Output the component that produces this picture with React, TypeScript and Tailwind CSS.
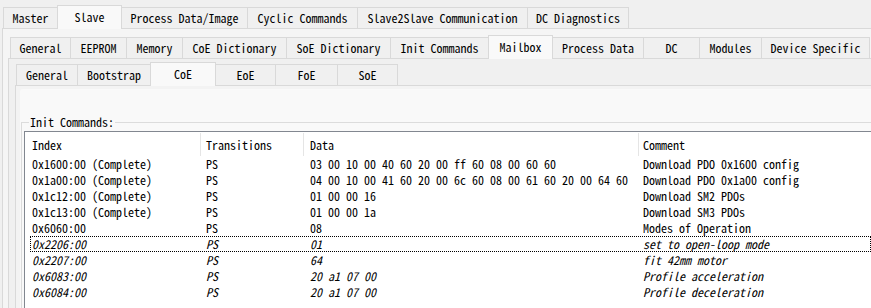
import React from "react";

type Tab = { label: string; start: number; end: number };

const row1: Tab[] = [
  { label: "Master", start: 3, end: 57 },
  { label: "Slave", start: 57, end: 121 },
  { label: "Process Data/Image", start: 121, end: 247 },
  { label: "Cyclic Commands", start: 247, end: 357 },
  { label: "Slave2Slave Communication", start: 357, end: 527 },
  { label: "DC Diagnostics", start: 527, end: 628 },
];

const row2: Tab[] = [
  { label: "General", start: 10, end: 70 },
  { label: "EEPROM", start: 70, end: 126 },
  { label: "Memory", start: 126, end: 182 },
  { label: "CoE Dictionary", start: 182, end: 286 },
  { label: "SoE Dictionary", start: 286, end: 390 },
  { label: "Init Commands", start: 390, end: 488 },
  { label: "Mailbox", start: 488, end: 552 },
  { label: "Process Data", start: 552, end: 643 },
  { label: "DC", start: 643, end: 699 },
  { label: "Modules", start: 699, end: 761 },
  { label: "Device Specific", start: 761, end: 869 },
];

const row3: Tab[] = [
  { label: "General", start: 16, end: 77 },
  { label: "Bootstrap", start: 77, end: 150 },
  { label: "CoE", start: 150, end: 215 },
  { label: "EoE", start: 215, end: 275 },
  { label: "FoE", start: 275, end: 337 },
  { label: "SoE", start: 337, end: 397 },
];

type Cmd = { index: string; tr: string; data: string; comment: string; italic?: boolean; focus?: boolean };

const cmds: Cmd[] = [
  { index: "0x1600:00 (Complete)", tr: "PS", data: "03 00 10 00 40 60 20 00 ff 60 08 00 60 60", comment: "Download PDO 0x1600 config" },
  { index: "0x1a00:00 (Complete)", tr: "PS", data: "04 00 10 00 41 60 20 00 6c 60 08 00 61 60 20 00 64 60", comment: "Download PDO 0x1a00 config" },
  { index: "0x1c12:00 (Complete)", tr: "PS", data: "01 00 00 16", comment: "Download SM2 PDOs" },
  { index: "0x1c13:00 (Complete)", tr: "PS", data: "01 00 00 1a", comment: "Download SM3 PDOs" },
  { index: "0x6060:00", tr: "PS", data: "08", comment: "Modes of Operation" },
  { index: "0x2206:00", tr: "PS", data: "01", comment: "set to open-loop mode", italic: true, focus: true },
  { index: "0x2207:00", tr: "PS", data: "64", comment: "fit 42mm motor", italic: true },
  { index: "0x6083:00", tr: "PS", data: "20 a1 07 00", comment: "Profile acceleration", italic: true },
  { index: "0x6084:00", tr: "PS", data: "20 a1 07 00", comment: "Profile deceleration", italic: true },
];

function TabRow({ tabs, selected, className }: { tabs: Tab[]; selected: number; className: string }) {
  return (
    <div className={"flex items-end " + className}>
      {tabs.map((t, i) => {
        const sel = i === selected;
        return (
          <div
            key={t.label + i}
            style={{ width: t.end - t.start + 1 }}
            className={
              "flex shrink-0 items-center justify-center whitespace-nowrap border-l border-r border-t border-[#d9d9d9] " +
              (i > 0 ? "-ml-px " : "") +
              (sel ? "relative z-10 -mb-px h-[24px] bg-[#f9f9f9] pb-px" : "h-[21px] bg-[#f0f0f0]")
            }
          >
            {t.label}
          </div>
        );
      })}
    </div>
  );
}

export default function App() {
  return (
    <div className="h-[308px] w-[871px] overflow-hidden bg-[#f0f0f0] font-['Noto_Sans_Mono_CJK_SC','Liberation_Mono',monospace] text-[12px] leading-[14px] text-black">
      <TabRow tabs={row1} selected={1} className="h-[28px] pl-[3px]" />
      <div className="ml-[2px] h-[300px] border-l border-t border-[#d9d9d9] bg-[#f5f5f5]">
        <TabRow tabs={row2} selected={6} className="h-[29px] pl-[7px]" />
        <div className="ml-[5px] h-[300px] border-l border-t border-[#d9d9d9] bg-[#f0f0f0]">
          <TabRow tabs={row3} selected={2} className="h-[26px] pl-[7px]" />
          <div className="ml-[6px] h-[300px] border-l border-t border-[#d9d9d9] bg-[#f3f3f3] pl-[4px] pt-[3px]">
            <div className="h-[300px] rounded-tl-[3px] bg-[#f9f9f9] pt-[33px] pl-[1px]">
              <div className="relative h-[300px] border-l border-t border-[#dcdcdc] pl-[2px] pt-[8px]">
                <div className="absolute -top-[8px] left-[7px] bg-[#f9f9f9] px-[1px]">Init Commands:</div>
                <div className="h-[300px] border-l border-t border-[#828790] bg-white">
                  <div className="flex h-[24px] pt-px">
                    <div className="flex h-full w-[176px] shrink-0 items-center border-r border-[#e5e5e5] pl-[7px]">Index</div>
                    <div className="flex h-full w-[103px] shrink-0 items-center border-r border-[#e5e5e5] pl-[5px]">Transitions</div>
                    <div className="flex h-full w-[335px] shrink-0 items-center border-r border-[#e5e5e5] pl-[6px]">Data</div>
                    <div className="flex h-full flex-1 items-center pl-[4px]">Comment</div>
                  </div>
                  <div className="ml-[5px] flex flex-col">
                    {cmds.map((c) => (
                      <div
                        key={c.index}
                        className={
                          "flex h-[16px] items-center whitespace-nowrap " +
                          (c.italic ? "italic " : "") +
                          (c.focus ? "outline-1 -outline-offset-1 outline-dotted outline-black" : "")
                        }
                      >
                        <div className="w-[176px] shrink-0 pl-[2px]">{c.index}</div>
                        <div className="w-[104px] shrink-0">{c.tr}</div>
                        <div className="w-[333px] shrink-0">{c.data}</div>
                        <div className="flex-1">{c.comment}</div>
                      </div>
                    ))}
                  </div>
                </div>
              </div>
            </div>
          </div>
        </div>
      </div>
    </div>
  );
}
